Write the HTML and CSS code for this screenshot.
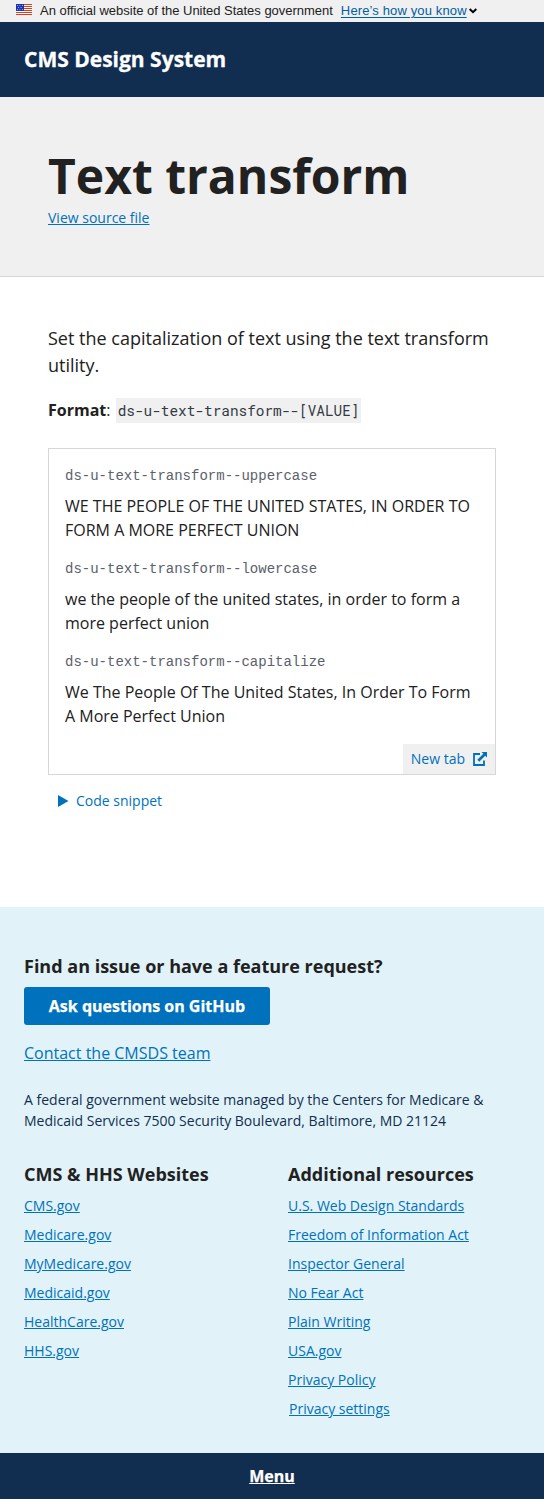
FILE: index.html
```html
<!DOCTYPE html>
<html lang="en">
<head>
<meta charset="utf-8">
<title>Text transform - CMS Design System</title>
<link rel="stylesheet" href="styles.css">
</head>
<body>
<div class="banner">
  <svg class="flag" viewBox="0 0 16 11" width="16" height="11"><path fill="#fff" d="M0 0h16v11H0z"/><path fill="#db3e1f" d="M0 0h16v1H0zM0 2h16v1H0zM0 4h16v1H0zM0 6h16v1H0zM0 8h16v1H0zM0 10h16v1H0z"/><path fill="#1e33b1" d="M0 0h8v7H0z"/><path fill="#fff" d="M1 1h.8v.8H1zM3.500 1h.8v.8h-.8zM6 1h.8v.8H6zM2.200 3h.8v.8h-.8zM4.700 3h.8v.8h-.8zM1 5h.8v.8H1zM3.500 5h.8v.8h-.8zM6 5h.8v.8H6z"/></svg>
  <span class="official">An official website of the United States government</span>
  <a class="know">Here’s how you know</a>
  <svg class="chev" width="8" height="6" viewBox="0 0 8 6"><path d="M.7 1L4 4.200 7.300 1" fill="none" stroke="#000" stroke-width="2"/></svg>
</div>
<header class="top"><span>CMS Design System</span></header>
<section class="hero"><h1>Text transform</h1><a>View source file</a></section>
<main>
  <p class="intro">Set the capitalization of text using the text transform utility.</p>
  <p class="format"><b>Format</b>: <code>ds-u-text-transform--[VALUE]</code></p>
  <div class="example">
    <code>ds-u-text-transform--uppercase</code>
    <p class="upper">We the People of the United States, in Order to form a more perfect Union</p>
    <code>ds-u-text-transform--lowercase</code>
    <p class="lower">We the People of the United States, in Order to form a more perfect Union</p>
    <code>ds-u-text-transform--capitalize</code>
    <p class="cap">We the People of the United States, in Order to form a more perfect Union</p>
    <a class="newtab">New tab <svg width="14" height="14" viewBox="0 0 14 14"><path d="M7 2H1v11h10V8.500" fill="none" stroke="#0071bc" stroke-width="1.800"/><path d="M8.500 0H14v5.500l-1.800-1.800-6 6-1.900-1.900 6-6z" fill="#0071bc"/></svg></a>
  </div>
  <div class="snippet"><svg width="11" height="12" viewBox="0 0 11 12"><path d="M0 0l10.500 6L0 12z" fill="#0071bc"/></svg>Code snippet</div>
</main>
<footer>
  <h2>Find an issue or have a feature request?</h2>
  <a class="button">Ask questions on GitHub</a>
  <a class="contact">Contact the CMSDS team</a>
  <p class="address">A federal government website managed by the Centers for Medicare &amp; Medicaid Services 7500 Security Boulevard, Baltimore, MD 21124</p>
  <div class="columns">
    <div><h2>CMS &amp; HHS Websites</h2><ul><li><a>CMS.gov</a></li><li><a>Medicare.gov</a></li><li><a>MyMedicare.gov</a></li><li><a>Medicaid.gov</a></li><li><a>HealthCare.gov</a></li><li><a>HHS.gov</a></li></ul></div>
    <div><h2>Additional resources</h2><ul><li><a>U.S. Web Design Standards</a></li><li><a>Freedom of Information Act</a></li><li><a>Inspector General</a></li><li><a>No Fear Act</a></li><li><a>Plain Writing</a></li><li><a>USA.gov</a></li><li><a>Privacy Policy</a></li><li class="settings"><a>Privacy settings</a></li></ul></div>
  </div>
</footer>
<nav class="menu"><a>Menu</a></nav>
</body>
</html>
```
FILE: styles.css
```css
* { box-sizing: border-box; }
body { margin: 0; background: #fff; color: #212121; font: 16px/24px "Open Sans", sans-serif; }
h1, h2, p, ul { margin: 0; padding: 0; }
ul { list-style: none; }
a { color: #0071bc; text-decoration: underline; }
.banner { display: flex; align-items: center; height: 22px; padding-left: 16px; background: #f0f0f0; font: 13px/20px "Liberation Sans", sans-serif; white-space: nowrap; }
.flag { margin: 0 8px 4px 0; }
.official { margin-right: 8px; letter-spacing: -0.02px; }
.know { letter-spacing: 0.13px; color: #005ea2; text-underline-offset: 2px; }
.chev { margin-left: 2px; }
.top { height: 75px; padding: 22px 24px; background: #112e51; color: #fff; font-size: 21px; line-height: 30px; font-weight: 700; -webkit-text-stroke: 0.3px #fff; }
.hero { height: 180px; padding: 48px; background: #f0f0f0; border-bottom: 1px solid #d6d7d9; font-size: 14px; line-height: 21px; }
h1 { font-size: 48px; line-height: 62px; font-weight: 700; }
.hero a { display: inline-block; }
main { height: 630px; padding: 48px; }
.intro { font-size: 18px; line-height: 27px; }
.format { height: 24px; margin-top: 19px; }
.format code { margin-left: 1px; padding: 3px 2px; background: #f0f0f0; color: #323a45; font: 14.4px/20px "Roboto Mono", "DejaVu Sans Mono", monospace; }
.example { position: relative; height: 327px; margin-top: 26px; padding: 16px; border: 1px solid #d6d7d9; }
.example code { display: block; height: 21px; padding-top: 1px; color: #5b616b; font: 14px/21px "Courier New", "Liberation Mono", monospace; }
.example p { margin: 8px 0 16px; }
.upper { text-transform: uppercase; }
.lower { text-transform: lowercase; }
.cap { text-transform: capitalize; }
.newtab { position: absolute; right: 0; bottom: 0; display: flex; align-items: center; gap: 8px; height: 30px; padding: 0 8px; background: #f0f0f0; font-size: 14px; text-decoration: none; }
.snippet { display: flex; align-items: center; gap: 7px; height: 20px; margin: 16px 0 0 10px; color: #0071bc; font-size: 14px; }
.snippet svg { margin-bottom: 1px; }
footer { height: 546px; padding: 46px 24px 0; background: #e1f3f8; }
h2 { font-size: 18px; line-height: 27px; font-weight: 700; }
.button { display: block; width: 246px; height: 38px; margin-top: 7px; border-radius: 3px; background: #0071bc; color: #fff; font-weight: 700; line-height: 38px; text-align: center; text-decoration: none; -webkit-text-stroke: 0.25px #fff; }
.contact { display: block; margin-top: 16px; }
.address { margin-top: 24px; color: #112e51; font-size: 14px; line-height: 21px; }
.columns { display: grid; grid-template-columns: 1fr 1fr; gap: 32px; margin-top: 30px; }
li { height: 21px; margin-bottom: 8px; font-size: 14px; line-height: 21px; }
.columns ul { margin-top: 7px; }
.settings { padding-left: 1px; }
.menu { height: 46px; background: #112e51; line-height: 46px; text-align: center; font-weight: 700; -webkit-text-stroke: 0.25px #fff; }
.menu a { color: #fff; }
```
